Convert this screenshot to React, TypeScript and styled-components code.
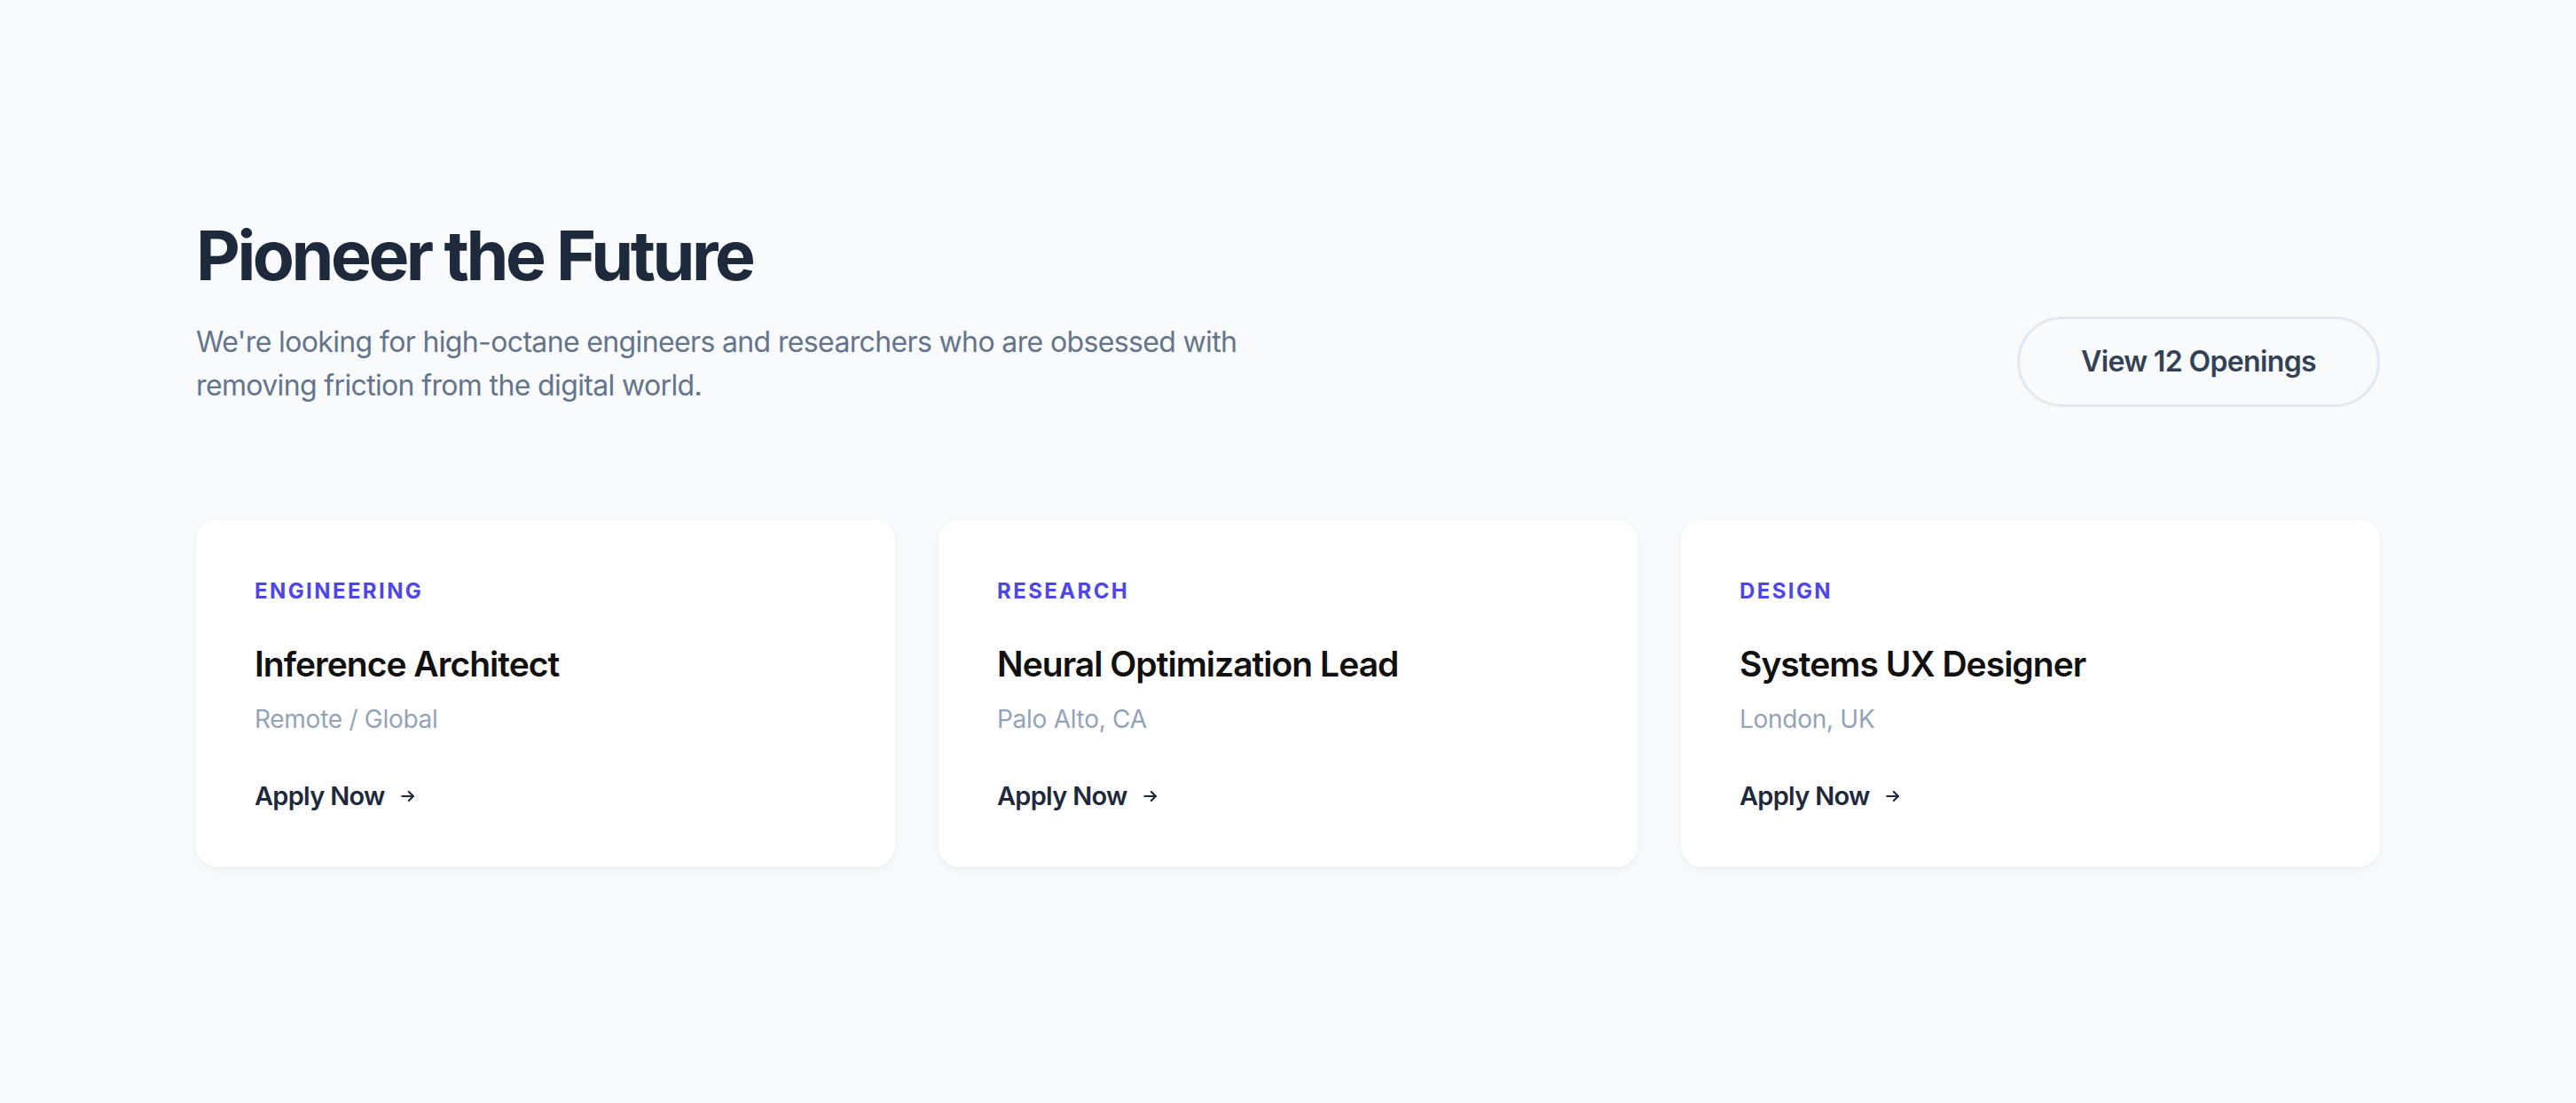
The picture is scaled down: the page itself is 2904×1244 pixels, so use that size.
import React from 'react';
import styled, { createGlobalStyle } from 'styled-components';

const GlobalStyle = createGlobalStyle`
  html, body {
    margin: 0;
    padding: 0;
    background: #f8fafc;
    font-family: Inter, "Liberation Sans", sans-serif;
  }
`;

const Section = styled.section`
  padding: 246px 221px 200px;
  min-height: 1244px;
  box-sizing: border-box;
`;

const Header = styled.div`
  display: flex;
  align-items: flex-end;
  justify-content: space-between;
  margin-bottom: 127px;
`;

const Title = styled.h2`
  margin: 0 0 30px;
  font-size: 77px;
  line-height: 1.1;
  font-weight: 700;
  letter-spacing: -0.045em;
  color: #1e293b;
`;

const Subtitle = styled.p`
  margin: 0;
  max-width: 1230px;
  font-size: 32px;
  line-height: 49px;
  letter-spacing: -0.02em;
  color: #64748b;
`;

const OutlineButton = styled.button`
  width: 409px;
  height: 102px;
  border: 3px solid #e2e8f0;
  border-radius: 51px;
  background: transparent;
  font-family: inherit;
  font-size: 32px;
  font-weight: 600;
  letter-spacing: -0.02em;
  color: #334155;
  cursor: pointer;
`;

const Grid = styled.div`
  display: grid;
  grid-template-columns: repeat(3, 1fr);
  gap: 49px;
`;

const Card = styled.div`
  background: #ffffff;
  border-radius: 24px;
  padding: 66px 66px 62px;
  box-shadow: 0 4px 12px rgba(15, 23, 42, 0.04), 0 1px 3px rgba(15, 23, 42, 0.03);
`;

const Category = styled.div`
  font-size: 24px;
  font-weight: 700;
  letter-spacing: 0.1em;
  color: #4f46e5;
  line-height: 30px;
  margin-bottom: 44px;
`;

const JobTitle = styled.h3`
  margin: 0 0 22px;
  font-size: 39px;
  line-height: 46px;
  font-weight: 600;
  letter-spacing: -0.025em;
  color: #111111;
`;

const Location = styled.div`
  font-size: 28px;
  line-height: 34px;
  color: #94a3b8;
  letter-spacing: -0.01em;
  margin-bottom: 52px;
`;

const ApplyLink = styled.a`
  display: inline-flex;
  align-items: center;
  gap: 16px;
  font-size: 29px;
  line-height: 36px;
  font-weight: 600;
  letter-spacing: -0.025em;
  color: #1e293b;
  text-decoration: none;
`;

const jobs = [
  { category: 'ENGINEERING', title: 'Inference Architect', location: 'Remote / Global' },
  { category: 'RESEARCH', title: 'Neural Optimization Lead', location: 'Palo Alto, CA' },
  { category: 'DESIGN', title: 'Systems UX Designer', location: 'London, UK' },
];

const Arrow = () => (
  <svg width="20" height="20" viewBox="0 0 24 24" fill="none" stroke="currentColor" strokeWidth="2.6" strokeLinecap="round" strokeLinejoin="round">
    <path d="M4 12h15" />
    <path d="M13 6l6 6-6 6" />
  </svg>
);

export default function App() {
  return (
    <>
      <GlobalStyle />
      <Section>
        <Header>
          <div>
            <Title>Pioneer the Future</Title>
            <Subtitle>
              We're looking for high-octane engineers and researchers who are obsessed with removing friction from the digital world.
            </Subtitle>
          </div>
          <OutlineButton>View 12 Openings</OutlineButton>
        </Header>
        <Grid>
          {jobs.map(job => (
            <Card key={job.title}>
              <Category>{job.category}</Category>
              <JobTitle>{job.title}</JobTitle>
              <Location>{job.location}</Location>
              <ApplyLink href="#">
                Apply Now <Arrow />
              </ApplyLink>
            </Card>
          ))}
        </Grid>
      </Section>
    </>
  );
}
